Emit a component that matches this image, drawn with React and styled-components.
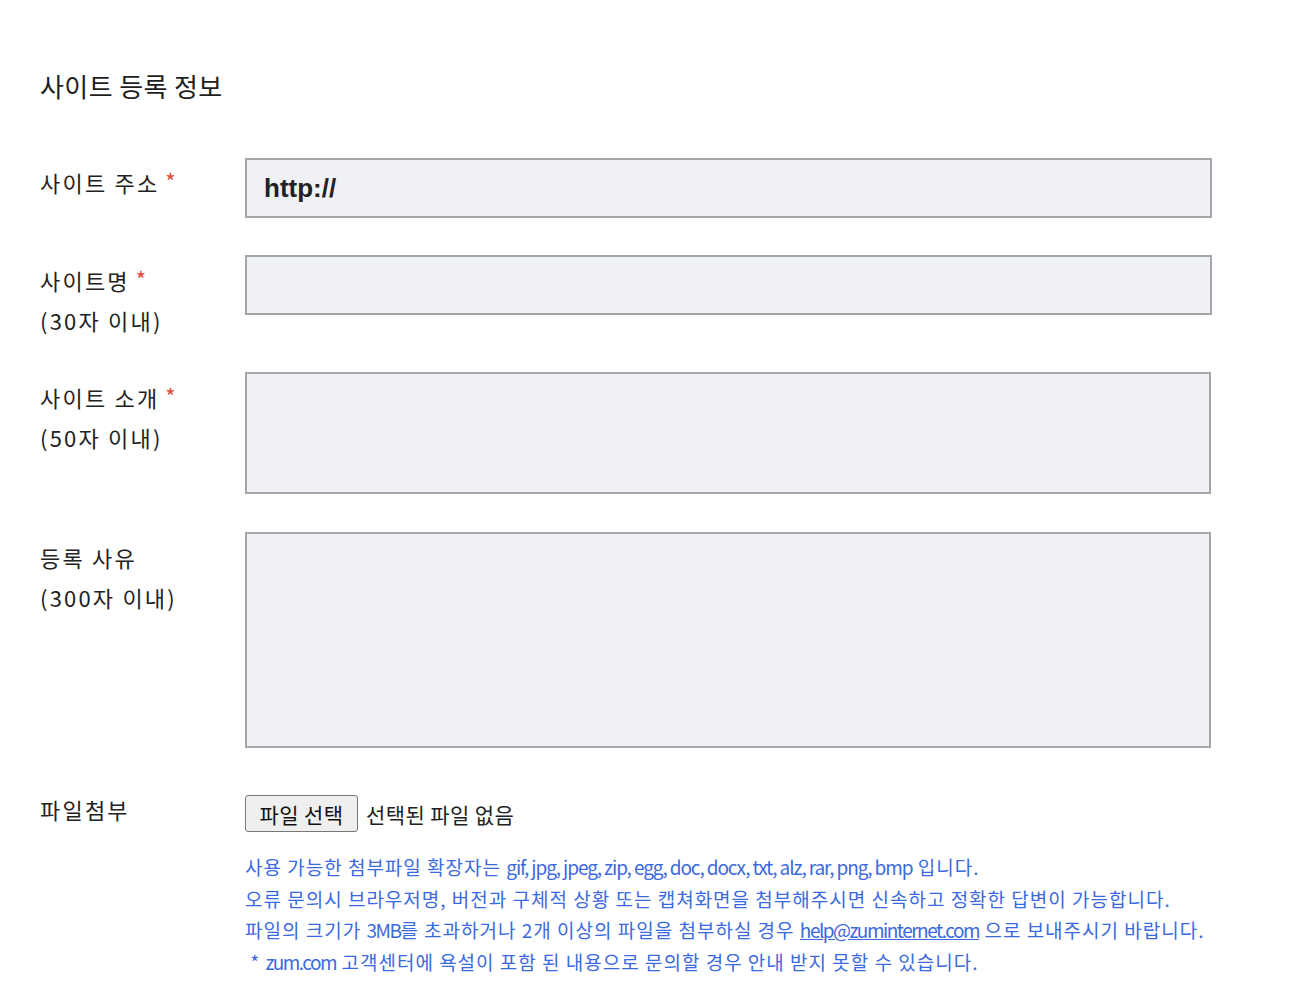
import React from 'react';
import styled, { createGlobalStyle } from 'styled-components';

const GlobalStyle = createGlobalStyle`
  body {
    margin: 0;
    background: #fff;
    font-family: "Noto Sans CJK KR", "Noto Sans", sans-serif;
    color: #222;
  }
`;

const Page = styled.div`
  padding: 68px 0 0 40px;
  width: 1172px;
`;

const Title = styled.h2`
  margin: 0 0 54px;
  font-size: 26px;
  font-weight: 400;
  line-height: 36px;
  letter-spacing: 0.4px;
  color: #1e1e1e;
`;

const Row = styled.div`
  display: grid;
  grid-template-columns: 205px 966px;
  align-items: start;
  margin-bottom: ${({ mb }) => mb}px;
`;

const Label = styled.div`
  margin-top: ${({ mt }) => (mt != null ? mt : 5)}px;
  font-size: 22px;
  line-height: 40px;
  letter-spacing: 2.2px;
  color: #222;
  white-space: nowrap;
`;

const Req = styled.span`
  color: #e0463a;
  margin-left: 6px;
  font-size: 22px;
  position: relative;
  top: -2px;
`;

const Field = styled.div`
  box-sizing: border-box;
  height: ${({ h }) => h}px;
  width: ${({ w }) => w || 966}px;
  background: #eff1f5;
  border: 2px solid #a3a7ab;
  display: flex;
  align-items: center;
  padding-left: 17px;
  font-family: "Liberation Sans", Arial, sans-serif;
  font-weight: 700;
  font-size: 26px;
  color: #222;
`;

const FileLine = styled.div`
  display: flex;
  align-items: center;
  gap: 8px;
  font-size: 21px;
  letter-spacing: 0.4px;
`;

const FileButton = styled.button`
  box-sizing: border-box;
  width: 113px;
  height: 37px;
  border: 1px solid #777;
  border-radius: 3px;
  background: #efefef;
  font-family: "Noto Sans CJK KR", sans-serif;
  font-size: 21px;
  letter-spacing: 0.4px;
  color: #111;
  padding: 0;
`;

const Notes = styled.div`
  margin-top: 19px;
  color: #3b6ae0;
  font-size: 19px;
  line-height: 31.5px;
  letter-spacing: 1px;
  white-space: nowrap;
`;

const Latin = styled.span`
  letter-spacing: ${({ tight }) => (tight ? -1.5 : -1.1)}px;
`;

const Mail = styled.a`
  color: inherit;
  text-decoration: underline;
  letter-spacing: -1.5px;
`;

export default function App() {
  return (
    <Page>
      <GlobalStyle />
      <Title>사이트 등록 정보</Title>

      <Row mb={37}>
        <Label mt={4}>사이트 주소<Req>*</Req></Label>
        <Field h={60} w={967}>http://</Field>
      </Row>

      <Row mb={32}>
        <Label>사이트명<Req>*</Req><br />(30자 이내)</Label>
        <Field h={60} w={967} />
      </Row>

      <Row mb={38}>
        <Label>사이트 소개<Req>*</Req><br />(50자 이내)</Label>
        <Field h={122} />
      </Row>

      <Row mb={47}>
        <Label>등록 사유<br />(300자 이내)</Label>
        <Field h={216} />
      </Row>

      <Row mb={20}>
        <Label mt={-6}>파일첨부</Label>
        <div>
          <FileLine>
            <FileButton>파일 선택</FileButton>
            <span>선택된 파일 없음</span>
          </FileLine>
          <Notes>
            사용 가능한 첨부파일 확장자는 <Latin>gif, jpg, jpeg, zip, egg, doc, docx, txt, alz, rar, png, bmp</Latin> 입니다.<br />
            오류 문의시 브라우저명, 버전과 구체적 상황 또는 캡쳐화면을 첨부해주시면 신속하고 정확한 답변이 가능합니다.<br />
            파일의 크기가 <Latin tight>3MB</Latin>를 초과하거나 2개 이상의 파일을 첨부하실 경우 <Mail>help@zuminternet.com</Mail> 으로 보내주시기 바랍니다.<br />
            &nbsp;* <Latin tight>zum.com</Latin> 고객센터에 욕설이 포함 된 내용으로 문의할 경우 안내 받지 못할 수 있습니다.
          </Notes>
        </div>
      </Row>
    </Page>
  );
}
